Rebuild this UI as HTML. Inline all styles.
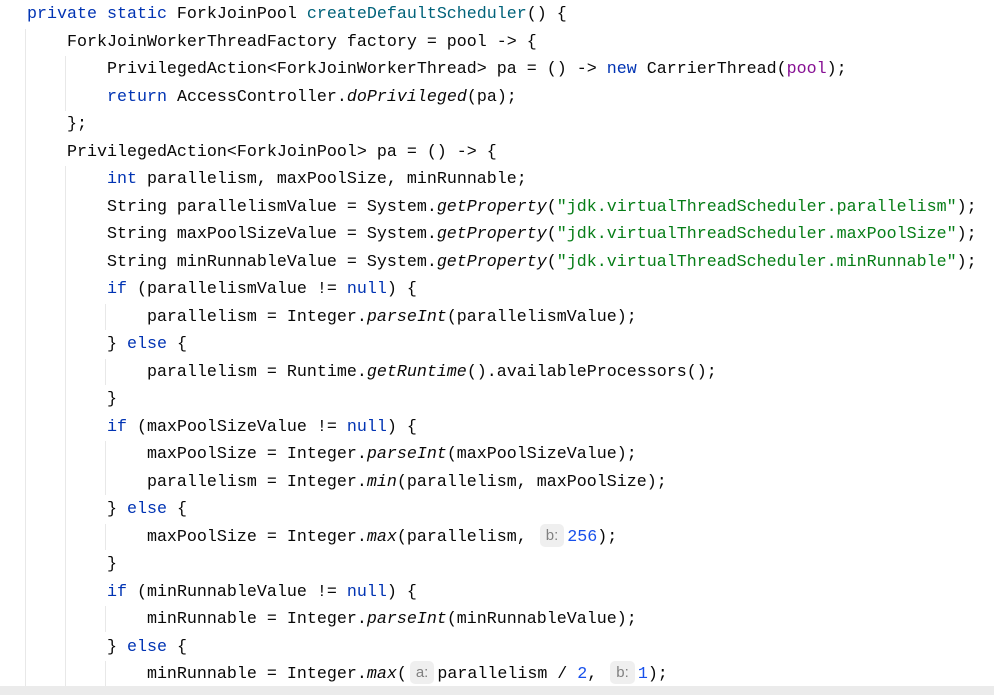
<!DOCTYPE html>
<html><head><meta charset="utf-8"><style>
html,body{margin:0;padding:0;background:#fff;width:994px;height:695px;overflow:hidden;position:relative}
.w{position:absolute;left:0;top:2px;width:994px;height:700px}
.l{position:absolute;left:27px;height:27.5px;line-height:27.5px;white-space:pre;font-family:"Liberation Mono",monospace;font-size:16.67px;color:#080808}
.k{color:#0033b3}.m{color:#00627a}.s{color:#067d17}.n{color:#1750eb}.f{color:#871094}.i{font-style:italic}
.h{display:inline-block;background:#efefef;color:#808080;border-radius:5px;font-family:"Liberation Sans",sans-serif;font-size:15px;line-height:23px;height:23px;padding:0 6px;margin:0 3px 0 3px;vertical-align:1px}
.g{position:absolute;width:1px;background:#e8e8e8}
.bar{position:absolute;left:0;top:686px;width:994px;height:9px;background:#ebebeb}
</style></head><body>
<div class="w">
<div class="g" style="left:25px;top:27px;height:668px"></div>
<div class="g" style="left:65px;top:54px;height:55px"></div>
<div class="g" style="left:65px;top:164px;height:531px"></div>
<div class="g" style="left:105px;top:302px;height:26px"></div>
<div class="g" style="left:105px;top:357px;height:26px"></div>
<div class="g" style="left:105px;top:439px;height:54px"></div>
<div class="g" style="left:105px;top:522px;height:26px"></div>
<div class="g" style="left:105px;top:604px;height:26px"></div>
<div class="g" style="left:105px;top:659px;height:27px"></div>

<div class="l" style="top:-1px"><span class="k">private static</span> ForkJoinPool <span class="m">createDefaultScheduler</span>() {</div>
<div class="l" style="top:26.5px">    ForkJoinWorkerThreadFactory factory = pool -&gt; {</div>
<div class="l" style="top:54px">        PrivilegedAction&lt;ForkJoinWorkerThread&gt; pa = () -&gt; <span class="k">new</span> CarrierThread(<span class="f">pool</span>);</div>
<div class="l" style="top:81.5px">        <span class="k">return</span> AccessController.<span class="i">doPrivileged</span>(pa);</div>
<div class="l" style="top:109px">    };</div>
<div class="l" style="top:136.5px">    PrivilegedAction&lt;ForkJoinPool&gt; pa = () -&gt; {</div>
<div class="l" style="top:164px">        <span class="k">int</span> parallelism, maxPoolSize, minRunnable;</div>
<div class="l" style="top:191.5px">        String parallelismValue = System.<span class="i">getProperty</span>(<span class="s">"jdk.virtualThreadScheduler.parallelism"</span>);</div>
<div class="l" style="top:219px">        String maxPoolSizeValue = System.<span class="i">getProperty</span>(<span class="s">"jdk.virtualThreadScheduler.maxPoolSize"</span>);</div>
<div class="l" style="top:246.5px">        String minRunnableValue = System.<span class="i">getProperty</span>(<span class="s">"jdk.virtualThreadScheduler.minRunnable"</span>);</div>
<div class="l" style="top:274px">        <span class="k">if</span> (parallelismValue != <span class="k">null</span>) {</div>
<div class="l" style="top:301.5px">            parallelism = Integer.<span class="i">parseInt</span>(parallelismValue);</div>
<div class="l" style="top:329px">        } <span class="k">else</span> {</div>
<div class="l" style="top:356.5px">            parallelism = Runtime.<span class="i">getRuntime</span>().availableProcessors();</div>
<div class="l" style="top:384px">        }</div>
<div class="l" style="top:411.5px">        <span class="k">if</span> (maxPoolSizeValue != <span class="k">null</span>) {</div>
<div class="l" style="top:439px">            maxPoolSize = Integer.<span class="i">parseInt</span>(maxPoolSizeValue);</div>
<div class="l" style="top:466.5px">            parallelism = Integer.<span class="i">min</span>(parallelism, maxPoolSize);</div>
<div class="l" style="top:494px">        } <span class="k">else</span> {</div>
<div class="l" style="top:521.5px">            maxPoolSize = Integer.<span class="i">max</span>(parallelism, <span class="h">b:</span><span class="n">256</span>);</div>
<div class="l" style="top:549px">        }</div>
<div class="l" style="top:576.5px">        <span class="k">if</span> (minRunnableValue != <span class="k">null</span>) {</div>
<div class="l" style="top:604px">            minRunnable = Integer.<span class="i">parseInt</span>(minRunnableValue);</div>
<div class="l" style="top:631.5px">        } <span class="k">else</span> {</div>
<div class="l" style="top:659px">            minRunnable = Integer.<span class="i">max</span>(<span class="h">a:</span>parallelism / <span class="n">2</span>, <span class="h">b:</span><span class="n">1</span>);</div>
<div class="l" style="top:686.5px">        }</div>
</div>
<div class="bar"></div>
</body></html>
